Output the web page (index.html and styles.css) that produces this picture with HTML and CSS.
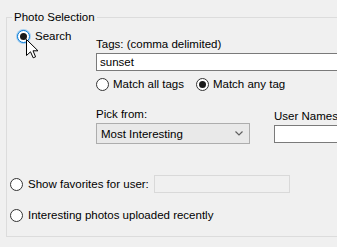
FILE: index.html
```html
<!DOCTYPE html>
<html lang="en">
<head>
  <meta charset="UTF-8">
  <title>Photo Selection</title>
  <link rel="stylesheet" href="styles.css">
</head>
<body>

  <!-- Photo Selection group -->
  <fieldset class="group">
    <legend>Photo Selection</legend>

    <div class="search-row">
      <div class="search-opt">
        <span class="radio checked focused"></span>
        <span>Search</span>
      </div>

      <div class="tag-panel">
        <div class="label">Tags: (comma delimited)</div>
        <div class="text-input">sunset</div>
        <div class="match-row">
          <span class="radio"></span>
          <span class="match-text">Match all tags</span>
          <span class="radio checked"></span>
          <span>Match any tag</span>
        </div>

        <div class="pick-row">
          <div class="pick-col">
            <div class="label">Pick from:</div>
            <div class="select">
              <span>Most Interesting</span>
              <svg class="chevron" width="8" height="5" viewBox="0 0 8 5">
                <path d="M0.5 0.5 L4 4 L7.5 0.5" fill="none" stroke="#606060" stroke-width="1.2"/>
              </svg>
            </div>
          </div>
          <div class="user-col">
            <div class="label">User Names</div>
            <div class="text-input user-input"></div>
          </div>
        </div>
      </div>
    </div>

    <div class="option-row fav-row">
      <span class="radio"></span>
      <span>Show favorites for user:</span>
      <div class="disabled-input"></div>
    </div>

    <div class="option-row recent-row">
      <span class="radio"></span>
      <span>Interesting photos uploaded recently</span>
    </div>
  </fieldset>

  <!-- Mouse pointer over the Search option -->
  <svg class="cursor" width="13" height="20" viewBox="0 0 13 20">
    <path d="M0.5 0.5 L0.5 16.5 L4.5 12.8 L7.2 18.8 L9.6 17.8 L7 11.8 L12 11.8 Z" fill="#fff" stroke="#000" stroke-width="1"/>
  </svg>

</body>
</html>
```

FILE: styles.css
```css
body {
  font-family: "Liberation Sans", Arial, sans-serif;
  font-size: 11.5px;
  line-height: 14px;
  background-color: #f0f0f0;
  color: #000;
  margin: 0;
  padding: 0;
  width: 337px;
  height: 247px;
  overflow: hidden;
  position: relative;
}
/* Group box */
.group {
  margin: 10px 0 0 6px;
  padding: 0 0 14px 3px;
  width: 420px;
  border: 1px solid #dcdcdc;
  min-width: 0;
}
.group legend {
  padding: 0 2px;
  margin-left: 2px;
  line-height: 14px;
}
/* Radio buttons */
.radio {
  display: inline-block;
  box-sizing: border-box;
  width: 13px;
  height: 13px;
  border: 1px solid #333;
  border-radius: 50%;
  background-color: #fff;
  position: relative;
  flex: none;
}
.radio.checked::after {
  content: "";
  position: absolute;
  left: 2px;
  top: 2px;
  width: 7px;
  height: 7px;
  border-radius: 50%;
  background-color: #1a1a1a;
}
.radio.focused {
  border-color: #0078d7;
  box-shadow: 0 0 0 1px #a8d0f0;
}
/* Search row */
.search-row {
  display: flex;
  margin-top: 5px;
}
.search-opt {
  display: flex;
  align-items: center;
  gap: 5px;
  width: 79px;
  padding-left: 7px;
  align-self: flex-start;
}
.tag-panel {
  padding-top: 8px;
}
.label {
  height: 14px;
}
.text-input {
  box-sizing: border-box;
  width: 260px;
  height: 18px;
  margin-top: 2px;
  padding: 1px 3px;
  background-color: #fff;
  border: 1px solid #7a7a7a;
}
.match-row {
  display: flex;
  align-items: center;
  margin-top: 6px;
  gap: 4px;
}
.match-text {
  margin-right: 8px;
}
/* Pick from */
.pick-row {
  display: flex;
  align-items: flex-end;
  margin-top: 16px;
  gap: 24px;
}
.select {
  box-sizing: border-box;
  width: 154px;
  height: 21px;
  margin-top: 2px;
  padding: 0 6px 0 4px;
  display: flex;
  align-items: center;
  justify-content: space-between;
  background-color: #e9e9e9;
  border: 1px solid #adadad;
}
.user-input {
  width: 100px;
  margin-bottom: 1px;
}
/* Other options */
.option-row {
  display: flex;
  align-items: center;
  gap: 5px;
}
.fav-row {
  margin-top: 31px;
}
.recent-row {
  margin-top: 15px;
}
.disabled-input {
  box-sizing: border-box;
  width: 136px;
  height: 18px;
  margin-left: 0;
  background-color: #f0f0f0;
  border: 1px solid #d9d9d9;
}
/* Mouse pointer */
.cursor {
  position: absolute;
  left: 26px;
  top: 39px;
}
```
